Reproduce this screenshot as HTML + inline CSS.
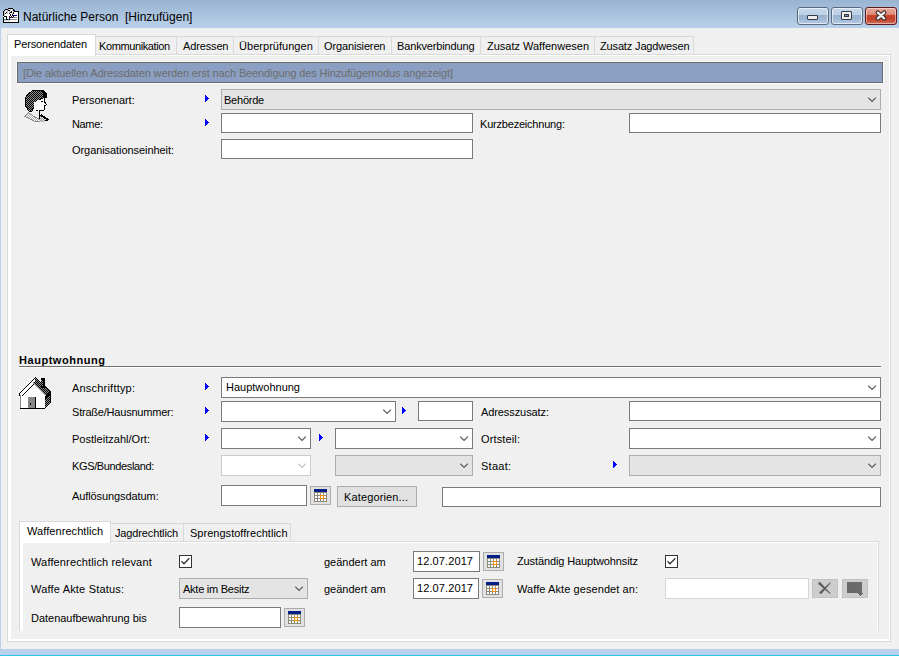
<!DOCTYPE html>
<html><head><meta charset="utf-8"><style>
html,body{margin:0;padding:0}
body{width:899px;height:656px;overflow:hidden;position:relative;background:#f0f0f0;font-family:"Liberation Sans",sans-serif}
body>div,body>svg{position:absolute;box-sizing:border-box}
.t{line-height:20px;white-space:pre}
</style></head><body>
<div style="left:0px;top:0px;width:899px;height:28px;background:linear-gradient(#99b4d1,#b9d1ea)"></div>
<div style="left:0px;top:28px;width:1px;height:621px;background:#b9d1ea"></div>
<div style="left:0px;top:649px;width:899px;height:6px;background:#bad2eb"></div>
<div style="left:0px;top:655px;width:899px;height:1px;background:#28c8e4"></div>
<div style="left:797px;top:7px;width:32px;height:18px;background:linear-gradient(#c5d7eb 0%,#bcd0e6 42%,#99b3d0 45%,#9fb8d4 70%,#b6cde6 100%);border:1px solid #5c6a80;border-radius:3px;box-shadow:inset 0 0 0 1px rgba(255,255,255,.6)"></div>
<div style="left:831px;top:7px;width:32px;height:18px;background:linear-gradient(#c5d7eb 0%,#bcd0e6 42%,#99b3d0 45%,#9fb8d4 70%,#b6cde6 100%);border:1px solid #5c6a80;border-radius:3px;box-shadow:inset 0 0 0 1px rgba(255,255,255,.6)"></div>
<div style="left:865px;top:7px;width:32px;height:18px;background:linear-gradient(#e9a99b 0%,#df8b79 40%,#c7472d 45%,#c34128 70%,#d2735d 100%);border:1px solid #5d1a1f;border-radius:3px;box-shadow:inset 0 0 0 1px rgba(255,255,255,.45)"></div>
<div style="left:807px;top:15px;width:11px;height:5px;background:#eee;border:1px solid #333a48;border-radius:1px"></div>
<div style="left:841px;top:11px;width:11px;height:9px;background:#eee;border:1px solid #333a48;border-radius:1px"></div>
<div style="left:844px;top:14px;width:5px;height:3px;background:#7d8fa8;border:1px solid #333a48"></div>
<svg style="left:873px;top:9px" width="16" height="13" viewBox="0 0 16 13"><path d="M4.8 3.6 L11.2 9.4 M11.2 3.6 L4.8 9.4" stroke="#3c2830" stroke-width="4.4" stroke-linecap="round"/><path d="M4.8 3.6 L11.2 9.4 M11.2 3.6 L4.8 9.4" stroke="#f2f2f2" stroke-width="2.2" stroke-linecap="round"/></svg>
<svg style="left:2px;top:7px" width="18" height="16" shape-rendering="crispEdges"><rect x="6" y="1" width="5" height="1" fill="#000"/><rect x="3" y="2" width="3" height="1" fill="#000"/><rect x="6" y="2" width="1" height="1" fill="#c0c0c0"/><rect x="7" y="2" width="1" height="1" fill="#fff"/><rect x="8" y="2" width="1" height="1" fill="#c0c0c0"/><rect x="9" y="2" width="1" height="1" fill="#fff"/><rect x="10" y="2" width="1" height="1" fill="#c0c0c0"/><rect x="11" y="2" width="1" height="1" fill="#000"/><rect x="2" y="3" width="1" height="1" fill="#000"/><rect x="3" y="3" width="1" height="1" fill="#c0c0c0"/><rect x="4" y="3" width="1" height="1" fill="#fff"/><rect x="5" y="3" width="1" height="1" fill="#c0c0c0"/><rect x="6" y="3" width="2" height="1" fill="#000"/><rect x="8" y="3" width="1" height="1" fill="#c0c0c0"/><rect x="9" y="3" width="1" height="1" fill="#fff"/><rect x="10" y="3" width="1" height="1" fill="#c0c0c0"/><rect x="11" y="3" width="2" height="1" fill="#000"/><rect x="1" y="4" width="1" height="1" fill="#000"/><rect x="2" y="4" width="1" height="1" fill="#c0c0c0"/><rect x="3" y="4" width="1" height="1" fill="#fff"/><rect x="4" y="4" width="2" height="1" fill="#c0c0c0"/><rect x="6" y="4" width="1" height="1" fill="#fff"/><rect x="7" y="4" width="1" height="1" fill="#c0c0c0"/><rect x="8" y="4" width="1" height="1" fill="#fff"/><rect x="9" y="4" width="1" height="1" fill="#000"/><rect x="10" y="4" width="1" height="1" fill="#fff"/><rect x="11" y="4" width="1" height="1" fill="#c0c0c0"/><rect x="12" y="4" width="5" height="1" fill="#000"/><rect x="1" y="5" width="1" height="1" fill="#000"/><rect x="2" y="5" width="1" height="1" fill="#c0c0c0"/><rect x="3" y="5" width="1" height="1" fill="#fff"/><rect x="4" y="5" width="1" height="1" fill="#000"/><rect x="5" y="5" width="1" height="1" fill="#c0c0c0"/><rect x="6" y="5" width="1" height="1" fill="#fff"/><rect x="7" y="5" width="1" height="1" fill="#c0c0c0"/><rect x="8" y="5" width="2" height="1" fill="#000"/><rect x="10" y="5" width="1" height="1" fill="#fff"/><rect x="11" y="5" width="1" height="1" fill="#000"/><rect x="12" y="5" width="4" height="1" fill="#fff"/><rect x="16" y="5" width="1" height="1" fill="#000"/><rect x="1" y="6" width="1" height="1" fill="#000"/><rect x="2" y="6" width="1" height="1" fill="#c0c0c0"/><rect x="3" y="6" width="1" height="1" fill="#000"/><rect x="4" y="6" width="1" height="1" fill="#fff"/><rect x="5" y="6" width="1" height="1" fill="#c0c0c0"/><rect x="6" y="6" width="1" height="1" fill="#fff"/><rect x="7" y="6" width="1" height="1" fill="#000"/><rect x="8" y="6" width="2" height="1" fill="#fff"/><rect x="10" y="6" width="1" height="1" fill="#c0c0c0"/><rect x="11" y="6" width="1" height="1" fill="#000"/><rect x="12" y="6" width="4" height="1" fill="#fff"/><rect x="16" y="6" width="1" height="1" fill="#000"/><rect x="1" y="7" width="1" height="1" fill="#000"/><rect x="2" y="7" width="1" height="1" fill="#c0c0c0"/><rect x="3" y="7" width="5" height="1" fill="#fff"/><rect x="8" y="7" width="1" height="1" fill="#000"/><rect x="9" y="7" width="1" height="1" fill="#fff"/><rect x="10" y="7" width="1" height="1" fill="#000"/><rect x="11" y="7" width="5" height="1" fill="#fff"/><rect x="16" y="7" width="1" height="1" fill="#000"/><rect x="1" y="8" width="1" height="1" fill="#000"/><rect x="2" y="8" width="1" height="1" fill="#c0c0c0"/><rect x="3" y="8" width="5" height="1" fill="#fff"/><rect x="8" y="8" width="1" height="1" fill="#000"/><rect x="9" y="8" width="1" height="1" fill="#fff"/><rect x="10" y="8" width="1" height="1" fill="#000"/><rect x="11" y="8" width="4" height="1" fill="#00008c"/><rect x="15" y="8" width="1" height="1" fill="#fff"/><rect x="16" y="8" width="1" height="1" fill="#000"/><rect x="1" y="9" width="1" height="1" fill="#fff"/><rect x="2" y="9" width="3" height="1" fill="#000"/><rect x="5" y="9" width="2" height="1" fill="#fff"/><rect x="7" y="9" width="1" height="1" fill="#000"/><rect x="8" y="9" width="1" height="1" fill="#fff"/><rect x="9" y="9" width="1" height="1" fill="#000"/><rect x="10" y="9" width="1" height="1" fill="#fff"/><rect x="11" y="9" width="1" height="1" fill="#000"/><rect x="12" y="9" width="4" height="1" fill="#fff"/><rect x="16" y="9" width="1" height="1" fill="#000"/><rect x="1" y="10" width="1" height="1" fill="#000"/><rect x="2" y="10" width="2" height="1" fill="#fff"/><rect x="4" y="10" width="1" height="1" fill="#000"/><rect x="5" y="10" width="2" height="1" fill="#fff"/><rect x="7" y="10" width="1" height="1" fill="#a000a8"/><rect x="8" y="10" width="1" height="1" fill="#000"/><rect x="9" y="10" width="1" height="1" fill="#a000a8"/><rect x="10" y="10" width="1" height="1" fill="#000"/><rect x="11" y="10" width="4" height="1" fill="#8c8c8c"/><rect x="15" y="10" width="1" height="1" fill="#fff"/><rect x="16" y="10" width="1" height="1" fill="#000"/><rect x="1" y="11" width="1" height="1" fill="#000"/><rect x="2" y="11" width="2" height="1" fill="#fff"/><rect x="4" y="11" width="1" height="1" fill="#000"/><rect x="5" y="11" width="2" height="1" fill="#fff"/><rect x="7" y="11" width="1" height="1" fill="#000"/><rect x="8" y="11" width="8" height="1" fill="#fff"/><rect x="16" y="11" width="1" height="1" fill="#000"/><rect x="1" y="12" width="1" height="1" fill="#000"/><rect x="2" y="12" width="2" height="1" fill="#1aa8a8"/><rect x="4" y="12" width="2" height="1" fill="#000"/><rect x="6" y="12" width="1" height="1" fill="#1aa8a8"/><rect x="7" y="12" width="1" height="1" fill="#000"/><rect x="8" y="12" width="7" height="1" fill="#8c8c8c"/><rect x="15" y="12" width="1" height="1" fill="#fff"/><rect x="16" y="12" width="1" height="1" fill="#000"/><rect x="1" y="13" width="1" height="1" fill="#000"/><rect x="2" y="13" width="6" height="1" fill="#d8cccc"/><rect x="8" y="13" width="8" height="1" fill="#fff"/><rect x="16" y="13" width="1" height="1" fill="#000"/><rect x="1" y="14" width="1" height="1" fill="#000"/><rect x="2" y="14" width="14" height="1" fill="#fff"/><rect x="16" y="14" width="1" height="1" fill="#000"/><rect x="1" y="15" width="16" height="1" fill="#000"/></svg>
<div style="left:7px;top:54px;width:884px;height:588px;border:1px solid #d9d9d9;box-sizing:border-box"></div>
<div style="left:8px;top:55px;width:882px;height:586px;border-left:3px solid #fff;border-top:1px solid #fff;border-right:1px solid #fff;border-bottom:2px solid #fff;box-sizing:border-box"></div>
<div style="left:95px;top:36px;width:82px;height:18px;border:1px solid #d9d9d9;border-bottom:none;box-sizing:border-box;background:#f0f0f0"></div>
<div style="left:176px;top:36px;width:58px;height:18px;border:1px solid #d9d9d9;border-bottom:none;box-sizing:border-box;background:#f0f0f0"></div>
<div style="left:233px;top:36px;width:86px;height:18px;border:1px solid #d9d9d9;border-bottom:none;box-sizing:border-box;background:#f0f0f0"></div>
<div style="left:318px;top:36px;width:74px;height:18px;border:1px solid #d9d9d9;border-bottom:none;box-sizing:border-box;background:#f0f0f0"></div>
<div style="left:391px;top:36px;width:90px;height:18px;border:1px solid #d9d9d9;border-bottom:none;box-sizing:border-box;background:#f0f0f0"></div>
<div style="left:480px;top:36px;width:115px;height:18px;border:1px solid #d9d9d9;border-bottom:none;box-sizing:border-box;background:#f0f0f0"></div>
<div style="left:594px;top:36px;width:100px;height:18px;border:1px solid #d9d9d9;border-bottom:none;box-sizing:border-box;background:#f0f0f0"></div>
<div style="left:7px;top:34px;width:89px;height:22px;border:1px solid #d9d9d9;border-bottom:none;box-sizing:border-box;background:#fff"></div>
<div style="left:16px;top:61px;width:868px;height:23px;background:#fbfbfb"></div>
<div style="left:17px;top:62px;width:866px;height:21px;background:#8a9fc1;border:1px solid #6b6b6b;box-sizing:border-box"></div>
<svg style="left:205px;top:95px" width="4" height="7" shape-rendering="crispEdges"><rect x="0" y="0" width="1" height="7" fill="#0000ff"/><rect x="1" y="1" width="1" height="5" fill="#0000ff"/><rect x="2" y="2" width="1" height="3" fill="#0000ff"/><rect x="3" y="3" width="1" height="1" fill="#0000ff"/></svg>
<svg style="left:205px;top:119px" width="4" height="7" shape-rendering="crispEdges"><rect x="0" y="0" width="1" height="7" fill="#0000ff"/><rect x="1" y="1" width="1" height="5" fill="#0000ff"/><rect x="2" y="2" width="1" height="3" fill="#0000ff"/><rect x="3" y="3" width="1" height="1" fill="#0000ff"/></svg>
<div style="left:221px;top:89px;width:660px;height:21px;background:#e4e4e4;border:1px solid #adadad;box-sizing:border-box"></div>
<svg style="left:868px;top:97px" width="9" height="6" viewBox="0 0 9 6"><path d="M0.25 0.7 L4.05 4.5 L7.85 0.7" fill="none" stroke="#555" stroke-width="1.15"/></svg>
<div style="left:221px;top:113px;width:252px;height:20px;background:#fff;border:1px solid #7a7a7a;box-sizing:border-box"></div>
<div style="left:629px;top:113px;width:252px;height:20px;background:#fff;border:1px solid #7a7a7a;box-sizing:border-box"></div>
<div style="left:221px;top:139px;width:252px;height:20px;background:#fff;border:1px solid #7a7a7a;box-sizing:border-box"></div>
<svg style="left:22px;top:88px" width="28" height="34" shape-rendering="crispEdges"><rect x="10" y="2" width="12" height="1" fill="#000"/><rect x="9" y="3" width="1" height="1" fill="#000"/><rect x="10" y="3" width="1" height="1" fill="#8c8c8c"/><rect x="11" y="3" width="1" height="1" fill="#000"/><rect x="12" y="3" width="1" height="1" fill="#8c8c8c"/><rect x="13" y="3" width="1" height="1" fill="#000"/><rect x="14" y="3" width="1" height="1" fill="#8c8c8c"/><rect x="15" y="3" width="1" height="1" fill="#000"/><rect x="16" y="3" width="1" height="1" fill="#8c8c8c"/><rect x="17" y="3" width="1" height="1" fill="#000"/><rect x="18" y="3" width="1" height="1" fill="#8c8c8c"/><rect x="19" y="3" width="4" height="1" fill="#000"/><rect x="7" y="4" width="2" height="1" fill="#000"/><rect x="9" y="4" width="1" height="1" fill="#8c8c8c"/><rect x="10" y="4" width="1" height="1" fill="#000"/><rect x="11" y="4" width="1" height="1" fill="#8c8c8c"/><rect x="12" y="4" width="1" height="1" fill="#000"/><rect x="13" y="4" width="1" height="1" fill="#8c8c8c"/><rect x="14" y="4" width="1" height="1" fill="#000"/><rect x="15" y="4" width="1" height="1" fill="#8c8c8c"/><rect x="16" y="4" width="1" height="1" fill="#000"/><rect x="17" y="4" width="1" height="1" fill="#8c8c8c"/><rect x="18" y="4" width="1" height="1" fill="#000"/><rect x="19" y="4" width="1" height="1" fill="#8c8c8c"/><rect x="20" y="4" width="4" height="1" fill="#000"/><rect x="6" y="5" width="2" height="1" fill="#000"/><rect x="8" y="5" width="1" height="1" fill="#8c8c8c"/><rect x="9" y="5" width="1" height="1" fill="#000"/><rect x="10" y="5" width="1" height="1" fill="#8c8c8c"/><rect x="11" y="5" width="1" height="1" fill="#000"/><rect x="12" y="5" width="1" height="1" fill="#8c8c8c"/><rect x="13" y="5" width="1" height="1" fill="#000"/><rect x="14" y="5" width="1" height="1" fill="#8c8c8c"/><rect x="15" y="5" width="1" height="1" fill="#000"/><rect x="16" y="5" width="1" height="1" fill="#8c8c8c"/><rect x="17" y="5" width="1" height="1" fill="#000"/><rect x="18" y="5" width="1" height="1" fill="#8c8c8c"/><rect x="19" y="5" width="1" height="1" fill="#000"/><rect x="20" y="5" width="1" height="1" fill="#8c8c8c"/><rect x="21" y="5" width="4" height="1" fill="#000"/><rect x="5" y="6" width="2" height="1" fill="#000"/><rect x="7" y="6" width="1" height="1" fill="#8c8c8c"/><rect x="8" y="6" width="1" height="1" fill="#000"/><rect x="9" y="6" width="1" height="1" fill="#8c8c8c"/><rect x="10" y="6" width="1" height="1" fill="#000"/><rect x="11" y="6" width="1" height="1" fill="#8c8c8c"/><rect x="12" y="6" width="1" height="1" fill="#000"/><rect x="13" y="6" width="1" height="1" fill="#8c8c8c"/><rect x="14" y="6" width="1" height="1" fill="#000"/><rect x="15" y="6" width="1" height="1" fill="#8c8c8c"/><rect x="16" y="6" width="1" height="1" fill="#000"/><rect x="17" y="6" width="1" height="1" fill="#8c8c8c"/><rect x="18" y="6" width="1" height="1" fill="#000"/><rect x="19" y="6" width="1" height="1" fill="#8c8c8c"/><rect x="20" y="6" width="5" height="1" fill="#000"/><rect x="4" y="7" width="2" height="1" fill="#000"/><rect x="6" y="7" width="1" height="1" fill="#8c8c8c"/><rect x="7" y="7" width="1" height="1" fill="#000"/><rect x="8" y="7" width="1" height="1" fill="#8c8c8c"/><rect x="9" y="7" width="1" height="1" fill="#000"/><rect x="10" y="7" width="1" height="1" fill="#8c8c8c"/><rect x="11" y="7" width="1" height="1" fill="#000"/><rect x="12" y="7" width="1" height="1" fill="#8c8c8c"/><rect x="13" y="7" width="1" height="1" fill="#000"/><rect x="14" y="7" width="1" height="1" fill="#8c8c8c"/><rect x="15" y="7" width="1" height="1" fill="#000"/><rect x="16" y="7" width="1" height="1" fill="#8c8c8c"/><rect x="17" y="7" width="1" height="1" fill="#000"/><rect x="18" y="7" width="1" height="1" fill="#8c8c8c"/><rect x="19" y="7" width="1" height="1" fill="#000"/><rect x="20" y="7" width="1" height="1" fill="#8c8c8c"/><rect x="21" y="7" width="4" height="1" fill="#000"/><rect x="4" y="8" width="1" height="1" fill="#000"/><rect x="5" y="8" width="1" height="1" fill="#8c8c8c"/><rect x="6" y="8" width="1" height="1" fill="#000"/><rect x="7" y="8" width="1" height="1" fill="#8c8c8c"/><rect x="8" y="8" width="1" height="1" fill="#000"/><rect x="9" y="8" width="1" height="1" fill="#8c8c8c"/><rect x="10" y="8" width="1" height="1" fill="#000"/><rect x="11" y="8" width="1" height="1" fill="#8c8c8c"/><rect x="12" y="8" width="1" height="1" fill="#000"/><rect x="13" y="8" width="1" height="1" fill="#8c8c8c"/><rect x="14" y="8" width="1" height="1" fill="#000"/><rect x="15" y="8" width="1" height="1" fill="#8c8c8c"/><rect x="16" y="8" width="1" height="1" fill="#000"/><rect x="17" y="8" width="1" height="1" fill="#8c8c8c"/><rect x="18" y="8" width="1" height="1" fill="#000"/><rect x="19" y="8" width="1" height="1" fill="#8c8c8c"/><rect x="20" y="8" width="5" height="1" fill="#000"/><rect x="3" y="9" width="1" height="1" fill="#000"/><rect x="4" y="9" width="1" height="1" fill="#8c8c8c"/><rect x="5" y="9" width="1" height="1" fill="#000"/><rect x="6" y="9" width="1" height="1" fill="#8c8c8c"/><rect x="7" y="9" width="1" height="1" fill="#000"/><rect x="8" y="9" width="1" height="1" fill="#8c8c8c"/><rect x="9" y="9" width="1" height="1" fill="#000"/><rect x="10" y="9" width="1" height="1" fill="#8c8c8c"/><rect x="11" y="9" width="1" height="1" fill="#000"/><rect x="12" y="9" width="1" height="1" fill="#8c8c8c"/><rect x="13" y="9" width="1" height="1" fill="#000"/><rect x="14" y="9" width="1" height="1" fill="#8c8c8c"/><rect x="15" y="9" width="1" height="1" fill="#000"/><rect x="16" y="9" width="1" height="1" fill="#8c8c8c"/><rect x="17" y="9" width="1" height="1" fill="#000"/><rect x="18" y="9" width="1" height="1" fill="#8c8c8c"/><rect x="19" y="9" width="1" height="1" fill="#000"/><rect x="20" y="9" width="1" height="1" fill="#8c8c8c"/><rect x="21" y="9" width="4" height="1" fill="#000"/><rect x="3" y="10" width="2" height="1" fill="#000"/><rect x="5" y="10" width="1" height="1" fill="#8c8c8c"/><rect x="6" y="10" width="1" height="1" fill="#000"/><rect x="7" y="10" width="1" height="1" fill="#8c8c8c"/><rect x="8" y="10" width="1" height="1" fill="#000"/><rect x="9" y="10" width="1" height="1" fill="#8c8c8c"/><rect x="10" y="10" width="1" height="1" fill="#000"/><rect x="11" y="10" width="1" height="1" fill="#8c8c8c"/><rect x="12" y="10" width="1" height="1" fill="#000"/><rect x="13" y="10" width="1" height="1" fill="#8c8c8c"/><rect x="14" y="10" width="1" height="1" fill="#000"/><rect x="15" y="10" width="1" height="1" fill="#8c8c8c"/><rect x="16" y="10" width="1" height="1" fill="#000"/><rect x="17" y="10" width="1" height="1" fill="#8c8c8c"/><rect x="18" y="10" width="3" height="1" fill="#000"/><rect x="22" y="10" width="1" height="1" fill="#000"/><rect x="3" y="11" width="1" height="1" fill="#000"/><rect x="4" y="11" width="1" height="1" fill="#8c8c8c"/><rect x="5" y="11" width="1" height="1" fill="#000"/><rect x="6" y="11" width="1" height="1" fill="#8c8c8c"/><rect x="7" y="11" width="1" height="1" fill="#000"/><rect x="8" y="11" width="1" height="1" fill="#8c8c8c"/><rect x="9" y="11" width="1" height="1" fill="#000"/><rect x="10" y="11" width="1" height="1" fill="#8c8c8c"/><rect x="11" y="11" width="1" height="1" fill="#000"/><rect x="12" y="11" width="1" height="1" fill="#8c8c8c"/><rect x="13" y="11" width="1" height="1" fill="#000"/><rect x="14" y="11" width="1" height="1" fill="#8c8c8c"/><rect x="15" y="11" width="1" height="1" fill="#000"/><rect x="16" y="11" width="1" height="1" fill="#8c8c8c"/><rect x="17" y="11" width="2" height="1" fill="#000"/><rect x="19" y="11" width="3" height="1" fill="#fff"/><rect x="22" y="11" width="1" height="1" fill="#000"/><rect x="3" y="12" width="2" height="1" fill="#000"/><rect x="5" y="12" width="1" height="1" fill="#8c8c8c"/><rect x="6" y="12" width="1" height="1" fill="#000"/><rect x="7" y="12" width="1" height="1" fill="#8c8c8c"/><rect x="8" y="12" width="1" height="1" fill="#000"/><rect x="9" y="12" width="1" height="1" fill="#8c8c8c"/><rect x="10" y="12" width="1" height="1" fill="#000"/><rect x="11" y="12" width="1" height="1" fill="#8c8c8c"/><rect x="12" y="12" width="1" height="1" fill="#000"/><rect x="13" y="12" width="1" height="1" fill="#8c8c8c"/><rect x="14" y="12" width="1" height="1" fill="#000"/><rect x="15" y="12" width="7" height="1" fill="#fff"/><rect x="22" y="12" width="1" height="1" fill="#000"/><rect x="3" y="13" width="1" height="1" fill="#000"/><rect x="4" y="13" width="1" height="1" fill="#8c8c8c"/><rect x="5" y="13" width="1" height="1" fill="#000"/><rect x="6" y="13" width="1" height="1" fill="#8c8c8c"/><rect x="7" y="13" width="1" height="1" fill="#000"/><rect x="8" y="13" width="1" height="1" fill="#8c8c8c"/><rect x="9" y="13" width="1" height="1" fill="#000"/><rect x="10" y="13" width="1" height="1" fill="#8c8c8c"/><rect x="11" y="13" width="1" height="1" fill="#000"/><rect x="12" y="13" width="1" height="1" fill="#8c8c8c"/><rect x="13" y="13" width="1" height="1" fill="#000"/><rect x="14" y="13" width="5" height="1" fill="#fff"/><rect x="19" y="13" width="2" height="1" fill="#000"/><rect x="21" y="13" width="1" height="1" fill="#fff"/><rect x="22" y="13" width="1" height="1" fill="#000"/><rect x="3" y="14" width="2" height="1" fill="#000"/><rect x="5" y="14" width="1" height="1" fill="#8c8c8c"/><rect x="6" y="14" width="1" height="1" fill="#000"/><rect x="7" y="14" width="1" height="1" fill="#8c8c8c"/><rect x="8" y="14" width="1" height="1" fill="#000"/><rect x="9" y="14" width="1" height="1" fill="#8c8c8c"/><rect x="10" y="14" width="1" height="1" fill="#000"/><rect x="11" y="14" width="1" height="1" fill="#8c8c8c"/><rect x="12" y="14" width="10" height="1" fill="#fff"/><rect x="22" y="14" width="2" height="1" fill="#000"/><rect x="3" y="15" width="1" height="1" fill="#000"/><rect x="4" y="15" width="1" height="1" fill="#8c8c8c"/><rect x="5" y="15" width="1" height="1" fill="#000"/><rect x="6" y="15" width="1" height="1" fill="#8c8c8c"/><rect x="7" y="15" width="1" height="1" fill="#000"/><rect x="8" y="15" width="1" height="1" fill="#8c8c8c"/><rect x="9" y="15" width="1" height="1" fill="#000"/><rect x="10" y="15" width="1" height="1" fill="#8c8c8c"/><rect x="11" y="15" width="1" height="1" fill="#000"/><rect x="12" y="15" width="11" height="1" fill="#fff"/><rect x="23" y="15" width="1" height="1" fill="#000"/><rect x="3" y="16" width="2" height="1" fill="#000"/><rect x="5" y="16" width="1" height="1" fill="#8c8c8c"/><rect x="6" y="16" width="1" height="1" fill="#000"/><rect x="7" y="16" width="1" height="1" fill="#8c8c8c"/><rect x="8" y="16" width="1" height="1" fill="#000"/><rect x="9" y="16" width="1" height="1" fill="#8c8c8c"/><rect x="10" y="16" width="1" height="1" fill="#000"/><rect x="11" y="16" width="1" height="1" fill="#8c8c8c"/><rect x="12" y="16" width="11" height="1" fill="#fff"/><rect x="24" y="16" width="1" height="1" fill="#000"/><rect x="3" y="17" width="1" height="1" fill="#000"/><rect x="4" y="17" width="1" height="1" fill="#8c8c8c"/><rect x="5" y="17" width="1" height="1" fill="#000"/><rect x="6" y="17" width="1" height="1" fill="#8c8c8c"/><rect x="7" y="17" width="1" height="1" fill="#000"/><rect x="8" y="17" width="1" height="1" fill="#8c8c8c"/><rect x="9" y="17" width="1" height="1" fill="#000"/><rect x="10" y="17" width="1" height="1" fill="#8c8c8c"/><rect x="11" y="17" width="1" height="1" fill="#000"/><rect x="12" y="17" width="10" height="1" fill="#fff"/><rect x="22" y="17" width="2" height="1" fill="#000"/><rect x="3" y="18" width="2" height="1" fill="#000"/><rect x="5" y="18" width="1" height="1" fill="#8c8c8c"/><rect x="6" y="18" width="1" height="1" fill="#000"/><rect x="7" y="18" width="1" height="1" fill="#8c8c8c"/><rect x="8" y="18" width="1" height="1" fill="#000"/><rect x="9" y="18" width="1" height="1" fill="#8c8c8c"/><rect x="10" y="18" width="1" height="1" fill="#000"/><rect x="11" y="18" width="1" height="1" fill="#8c8c8c"/><rect x="12" y="18" width="10" height="1" fill="#fff"/><rect x="22" y="18" width="1" height="1" fill="#000"/><rect x="4" y="19" width="2" height="1" fill="#000"/><rect x="6" y="19" width="1" height="1" fill="#8c8c8c"/><rect x="7" y="19" width="1" height="1" fill="#000"/><rect x="8" y="19" width="1" height="1" fill="#8c8c8c"/><rect x="9" y="19" width="1" height="1" fill="#000"/><rect x="10" y="19" width="1" height="1" fill="#8c8c8c"/><rect x="11" y="19" width="1" height="1" fill="#000"/><rect x="12" y="19" width="10" height="1" fill="#fff"/><rect x="22" y="19" width="1" height="1" fill="#000"/><rect x="5" y="20" width="2" height="1" fill="#000"/><rect x="7" y="20" width="1" height="1" fill="#8c8c8c"/><rect x="8" y="20" width="1" height="1" fill="#000"/><rect x="9" y="20" width="1" height="1" fill="#8c8c8c"/><rect x="10" y="20" width="2" height="1" fill="#000"/><rect x="12" y="20" width="10" height="1" fill="#fff"/><rect x="22" y="20" width="1" height="1" fill="#000"/><rect x="5" y="21" width="1" height="1" fill="#000"/><rect x="6" y="21" width="1" height="1" fill="#8c8c8c"/><rect x="7" y="21" width="1" height="1" fill="#000"/><rect x="8" y="21" width="1" height="1" fill="#8c8c8c"/><rect x="9" y="21" width="2" height="1" fill="#000"/><rect x="13" y="21" width="9" height="1" fill="#fff"/><rect x="22" y="21" width="1" height="1" fill="#000"/><rect x="6" y="22" width="1" height="1" fill="#000"/><rect x="7" y="22" width="1" height="1" fill="#8c8c8c"/><rect x="8" y="22" width="1" height="1" fill="#000"/><rect x="9" y="22" width="1" height="1" fill="#8c8c8c"/><rect x="10" y="22" width="1" height="1" fill="#000"/><rect x="13" y="22" width="1" height="1" fill="#fff"/><rect x="14" y="22" width="2" height="1" fill="#000"/><rect x="16" y="22" width="1" height="1" fill="#fff"/><rect x="17" y="22" width="5" height="1" fill="#000"/><rect x="22" y="22" width="1" height="1" fill="#fff"/><rect x="7" y="23" width="3" height="1" fill="#000"/><rect x="17" y="23" width="1" height="1" fill="#000"/><rect x="6" y="24" width="1" height="1" fill="#888"/><rect x="17" y="24" width="1" height="1" fill="#000"/><rect x="5" y="25" width="1" height="1" fill="#888"/><rect x="6" y="25" width="1" height="1" fill="#b0b0b0"/><rect x="7" y="25" width="1" height="1" fill="#888"/><rect x="17" y="25" width="1" height="1" fill="#000"/><rect x="4" y="26" width="1" height="1" fill="#888"/><rect x="5" y="26" width="1" height="1" fill="#b0b0b0"/><rect x="6" y="26" width="1" height="1" fill="#fff"/><rect x="7" y="26" width="1" height="1" fill="#b0b0b0"/><rect x="8" y="26" width="2" height="1" fill="#888"/><rect x="17" y="26" width="1" height="1" fill="#000"/><rect x="19" y="26" width="1" height="1" fill="#000"/><rect x="3" y="27" width="1" height="1" fill="#888"/><rect x="4" y="27" width="1" height="1" fill="#b0b0b0"/><rect x="5" y="27" width="1" height="1" fill="#fff"/><rect x="6" y="27" width="1" height="1" fill="#b0b0b0"/><rect x="7" y="27" width="1" height="1" fill="#fff"/><rect x="8" y="27" width="1" height="1" fill="#b0b0b0"/><rect x="9" y="27" width="1" height="1" fill="#fff"/><rect x="10" y="27" width="1" height="1" fill="#888"/><rect x="17" y="27" width="4" height="1" fill="#000"/><rect x="2" y="28" width="2" height="1" fill="#888"/><rect x="4" y="28" width="1" height="1" fill="#fff"/><rect x="5" y="28" width="1" height="1" fill="#b0b0b0"/><rect x="6" y="28" width="1" height="1" fill="#fff"/><rect x="7" y="28" width="1" height="1" fill="#b0b0b0"/><rect x="8" y="28" width="1" height="1" fill="#fff"/><rect x="9" y="28" width="1" height="1" fill="#b0b0b0"/><rect x="10" y="28" width="1" height="1" fill="#fff"/><rect x="11" y="28" width="2" height="1" fill="#888"/><rect x="17" y="28" width="1" height="1" fill="#000"/><rect x="18" y="28" width="1" height="1" fill="#999"/><rect x="19" y="28" width="4" height="1" fill="#000"/><rect x="4" y="29" width="2" height="1" fill="#888"/><rect x="6" y="29" width="1" height="1" fill="#b0b0b0"/><rect x="7" y="29" width="1" height="1" fill="#fff"/><rect x="8" y="29" width="1" height="1" fill="#b0b0b0"/><rect x="9" y="29" width="1" height="1" fill="#fff"/><rect x="10" y="29" width="1" height="1" fill="#b0b0b0"/><rect x="11" y="29" width="1" height="1" fill="#fff"/><rect x="12" y="29" width="1" height="1" fill="#b0b0b0"/><rect x="13" y="29" width="2" height="1" fill="#888"/><rect x="17" y="29" width="1" height="1" fill="#000"/><rect x="18" y="29" width="1" height="1" fill="#ddd"/><rect x="19" y="29" width="1" height="1" fill="#999"/><rect x="21" y="29" width="3" height="1" fill="#000"/><rect x="6" y="30" width="2" height="1" fill="#888"/><rect x="8" y="30" width="1" height="1" fill="#fff"/><rect x="9" y="30" width="1" height="1" fill="#b0b0b0"/><rect x="10" y="30" width="1" height="1" fill="#fff"/><rect x="11" y="30" width="1" height="1" fill="#b0b0b0"/><rect x="12" y="30" width="1" height="1" fill="#fff"/><rect x="13" y="30" width="1" height="1" fill="#b0b0b0"/><rect x="14" y="30" width="1" height="1" fill="#fff"/><rect x="15" y="30" width="2" height="1" fill="#888"/><rect x="17" y="30" width="1" height="1" fill="#000"/><rect x="18" y="30" width="1" height="1" fill="#999"/><rect x="19" y="30" width="1" height="1" fill="#ddd"/><rect x="20" y="30" width="1" height="1" fill="#999"/><rect x="21" y="30" width="1" height="1" fill="#ddd"/><rect x="22" y="30" width="4" height="1" fill="#000"/><rect x="8" y="31" width="2" height="1" fill="#888"/><rect x="10" y="31" width="1" height="1" fill="#b0b0b0"/><rect x="11" y="31" width="1" height="1" fill="#fff"/><rect x="12" y="31" width="1" height="1" fill="#b0b0b0"/><rect x="13" y="31" width="1" height="1" fill="#fff"/><rect x="14" y="31" width="1" height="1" fill="#b0b0b0"/><rect x="15" y="31" width="1" height="1" fill="#fff"/><rect x="16" y="31" width="1" height="1" fill="#b0b0b0"/><rect x="17" y="31" width="1" height="1" fill="#999"/><rect x="18" y="31" width="1" height="1" fill="#ddd"/><rect x="19" y="31" width="1" height="1" fill="#999"/><rect x="20" y="31" width="1" height="1" fill="#ddd"/><rect x="21" y="31" width="1" height="1" fill="#999"/><rect x="22" y="31" width="1" height="1" fill="#ddd"/><rect x="24" y="31" width="3" height="1" fill="#000"/><rect x="10" y="32" width="2" height="1" fill="#888"/><rect x="12" y="32" width="1" height="1" fill="#fff"/><rect x="13" y="32" width="1" height="1" fill="#b0b0b0"/><rect x="14" y="32" width="1" height="1" fill="#fff"/><rect x="15" y="32" width="1" height="1" fill="#b0b0b0"/><rect x="16" y="32" width="1" height="1" fill="#fff"/><rect x="17" y="32" width="1" height="1" fill="#ddd"/><rect x="18" y="32" width="1" height="1" fill="#999"/><rect x="19" y="32" width="1" height="1" fill="#ddd"/><rect x="20" y="32" width="1" height="1" fill="#999"/><rect x="21" y="32" width="1" height="1" fill="#ddd"/><rect x="22" y="32" width="1" height="1" fill="#999"/><rect x="23" y="32" width="3" height="1" fill="#000"/><rect x="12" y="33" width="5" height="1" fill="#888"/><rect x="17" y="33" width="1" height="1" fill="#999"/><rect x="18" y="33" width="1" height="1" fill="#ddd"/><rect x="19" y="33" width="1" height="1" fill="#999"/><rect x="20" y="33" width="1" height="1" fill="#ddd"/><rect x="21" y="33" width="1" height="1" fill="#999"/><rect x="22" y="33" width="1" height="1" fill="#ddd"/></svg>
<div style="left:19px;top:366px;width:862px;height:1px;background:#6e6e6e"></div>
<div style="left:19px;top:367px;width:862px;height:1px;background:#fff"></div>
<svg style="left:16px;top:374px" width="38" height="38" shape-rendering="crispEdges"><rect x="19" y="3" width="1" height="1" fill="#000"/><rect x="18" y="4" width="1" height="1" fill="#000"/><rect x="19" y="4" width="1" height="1" fill="#8c8c8c"/><rect x="20" y="4" width="1" height="1" fill="#000"/><rect x="25" y="4" width="4" height="1" fill="#000"/><rect x="17" y="5" width="1" height="1" fill="#000"/><rect x="18" y="5" width="1" height="1" fill="#fff"/><rect x="19" y="5" width="1" height="1" fill="#000"/><rect x="20" y="5" width="1" height="1" fill="#8c8c8c"/><rect x="21" y="5" width="1" height="1" fill="#000"/><rect x="25" y="5" width="4" height="1" fill="#000"/><rect x="16" y="6" width="1" height="1" fill="#000"/><rect x="17" y="6" width="2" height="1" fill="#fff"/><rect x="19" y="6" width="1" height="1" fill="#8c8c8c"/><rect x="20" y="6" width="1" height="1" fill="#000"/><rect x="21" y="6" width="1" height="1" fill="#8c8c8c"/><rect x="22" y="6" width="1" height="1" fill="#000"/><rect x="25" y="6" width="1" height="1" fill="#888"/><rect x="26" y="6" width="3" height="1" fill="#000"/><rect x="15" y="7" width="1" height="1" fill="#000"/><rect x="16" y="7" width="3" height="1" fill="#fff"/><rect x="19" y="7" width="1" height="1" fill="#000"/><rect x="20" y="7" width="1" height="1" fill="#8c8c8c"/><rect x="21" y="7" width="1" height="1" fill="#000"/><rect x="22" y="7" width="1" height="1" fill="#8c8c8c"/><rect x="23" y="7" width="1" height="1" fill="#000"/><rect x="25" y="7" width="1" height="1" fill="#000"/><rect x="26" y="7" width="1" height="1" fill="#888"/><rect x="27" y="7" width="2" height="1" fill="#000"/><rect x="14" y="8" width="1" height="1" fill="#000"/><rect x="15" y="8" width="2" height="1" fill="#fff"/><rect x="17" y="8" width="1" height="1" fill="#888"/><rect x="18" y="8" width="1" height="1" fill="#000"/><rect x="19" y="8" width="1" height="1" fill="#8c8c8c"/><rect x="20" y="8" width="1" height="1" fill="#000"/><rect x="21" y="8" width="1" height="1" fill="#8c8c8c"/><rect x="22" y="8" width="1" height="1" fill="#000"/><rect x="23" y="8" width="1" height="1" fill="#8c8c8c"/><rect x="24" y="8" width="1" height="1" fill="#000"/><rect x="25" y="8" width="1" height="1" fill="#888"/><rect x="26" y="8" width="3" height="1" fill="#000"/><rect x="13" y="9" width="1" height="1" fill="#000"/><rect x="14" y="9" width="3" height="1" fill="#fff"/><rect x="17" y="9" width="1" height="1" fill="#b8b8b8"/><rect x="18" y="9" width="1" height="1" fill="#888"/><rect x="19" y="9" width="1" height="1" fill="#000"/><rect x="20" y="9" width="1" height="1" fill="#8c8c8c"/><rect x="21" y="9" width="1" height="1" fill="#000"/><rect x="22" y="9" width="1" height="1" fill="#8c8c8c"/><rect x="23" y="9" width="1" height="1" fill="#000"/><rect x="24" y="9" width="1" height="1" fill="#8c8c8c"/><rect x="25" y="9" width="1" height="1" fill="#000"/><rect x="26" y="9" width="1" height="1" fill="#888"/><rect x="27" y="9" width="2" height="1" fill="#000"/><rect x="12" y="10" width="1" height="1" fill="#000"/><rect x="13" y="10" width="3" height="1" fill="#fff"/><rect x="17" y="10" width="1" height="1" fill="#000"/><rect x="18" y="10" width="1" height="1" fill="#b8b8b8"/><rect x="19" y="10" width="1" height="1" fill="#888"/><rect x="20" y="10" width="1" height="1" fill="#000"/><rect x="21" y="10" width="1" height="1" fill="#8c8c8c"/><rect x="22" y="10" width="1" height="1" fill="#000"/><rect x="23" y="10" width="1" height="1" fill="#8c8c8c"/><rect x="24" y="10" width="1" height="1" fill="#000"/><rect x="25" y="10" width="1" height="1" fill="#888"/><rect x="26" y="10" width="3" height="1" fill="#000"/><rect x="11" y="11" width="1" height="1" fill="#000"/><rect x="12" y="11" width="3" height="1" fill="#fff"/><rect x="16" y="11" width="1" height="1" fill="#000"/><rect x="17" y="11" width="2" height="1" fill="#fff"/><rect x="19" y="11" width="1" height="1" fill="#b8b8b8"/><rect x="20" y="11" width="1" height="1" fill="#888"/><rect x="21" y="11" width="1" height="1" fill="#000"/><rect x="22" y="11" width="1" height="1" fill="#8c8c8c"/><rect x="23" y="11" width="1" height="1" fill="#000"/><rect x="24" y="11" width="1" height="1" fill="#8c8c8c"/><rect x="25" y="11" width="1" height="1" fill="#000"/><rect x="26" y="11" width="1" height="1" fill="#888"/><rect x="27" y="11" width="2" height="1" fill="#000"/><rect x="10" y="12" width="1" height="1" fill="#000"/><rect x="11" y="12" width="3" height="1" fill="#fff"/><rect x="15" y="12" width="1" height="1" fill="#000"/><rect x="16" y="12" width="4" height="1" fill="#fff"/><rect x="20" y="12" width="1" height="1" fill="#b8b8b8"/><rect x="21" y="12" width="1" height="1" fill="#888"/><rect x="22" y="12" width="1" height="1" fill="#000"/><rect x="23" y="12" width="1" height="1" fill="#8c8c8c"/><rect x="24" y="12" width="6" height="1" fill="#000"/><rect x="9" y="13" width="1" height="1" fill="#000"/><rect x="10" y="13" width="3" height="1" fill="#fff"/><rect x="14" y="13" width="1" height="1" fill="#000"/><rect x="15" y="13" width="6" height="1" fill="#fff"/><rect x="21" y="13" width="1" height="1" fill="#b8b8b8"/><rect x="22" y="13" width="1" height="1" fill="#888"/><rect x="23" y="13" width="1" height="1" fill="#000"/><rect x="24" y="13" width="1" height="1" fill="#8c8c8c"/><rect x="25" y="13" width="6" height="1" fill="#000"/><rect x="8" y="14" width="1" height="1" fill="#000"/><rect x="9" y="14" width="3" height="1" fill="#fff"/><rect x="13" y="14" width="1" height="1" fill="#000"/><rect x="14" y="14" width="8" height="1" fill="#fff"/><rect x="22" y="14" width="1" height="1" fill="#b8b8b8"/><rect x="23" y="14" width="1" height="1" fill="#888"/><rect x="24" y="14" width="1" height="1" fill="#000"/><rect x="25" y="14" width="1" height="1" fill="#8c8c8c"/><rect x="26" y="14" width="1" height="1" fill="#000"/><rect x="27" y="14" width="1" height="1" fill="#8c8c8c"/><rect x="28" y="14" width="1" height="1" fill="#000"/><rect x="29" y="14" width="1" height="1" fill="#8c8c8c"/><rect x="30" y="14" width="2" height="1" fill="#000"/><rect x="7" y="15" width="1" height="1" fill="#000"/><rect x="8" y="15" width="3" height="1" fill="#fff"/><rect x="12" y="15" width="1" height="1" fill="#000"/><rect x="13" y="15" width="10" height="1" fill="#fff"/><rect x="23" y="15" width="1" height="1" fill="#b8b8b8"/><rect x="24" y="15" width="1" height="1" fill="#888"/><rect x="25" y="15" width="1" height="1" fill="#000"/><rect x="26" y="15" width="1" height="1" fill="#8c8c8c"/><rect x="27" y="15" width="1" height="1" fill="#000"/><rect x="28" y="15" width="1" height="1" fill="#8c8c8c"/><rect x="29" y="15" width="1" height="1" fill="#000"/><rect x="30" y="15" width="1" height="1" fill="#8c8c8c"/><rect x="31" y="15" width="2" height="1" fill="#000"/><rect x="6" y="16" width="1" height="1" fill="#000"/><rect x="7" y="16" width="4" height="1" fill="#fff"/><rect x="11" y="16" width="1" height="1" fill="#000"/><rect x="12" y="16" width="12" height="1" fill="#fff"/><rect x="24" y="16" width="1" height="1" fill="#b8b8b8"/><rect x="25" y="16" width="1" height="1" fill="#888"/><rect x="26" y="16" width="1" height="1" fill="#000"/><rect x="27" y="16" width="1" height="1" fill="#8c8c8c"/><rect x="28" y="16" width="1" height="1" fill="#000"/><rect x="29" y="16" width="1" height="1" fill="#8c8c8c"/><rect x="30" y="16" width="1" height="1" fill="#000"/><rect x="31" y="16" width="1" height="1" fill="#8c8c8c"/><rect x="32" y="16" width="2" height="1" fill="#000"/><rect x="5" y="17" width="1" height="1" fill="#000"/><rect x="6" y="17" width="4" height="1" fill="#fff"/><rect x="10" y="17" width="1" height="1" fill="#000"/><rect x="11" y="17" width="14" height="1" fill="#fff"/><rect x="25" y="17" width="1" height="1" fill="#b8b8b8"/><rect x="26" y="17" width="1" height="1" fill="#888"/><rect x="27" y="17" width="1" height="1" fill="#000"/><rect x="28" y="17" width="1" height="1" fill="#8c8c8c"/><rect x="29" y="17" width="1" height="1" fill="#000"/><rect x="30" y="17" width="1" height="1" fill="#8c8c8c"/><rect x="31" y="17" width="1" height="1" fill="#000"/><rect x="32" y="17" width="1" height="1" fill="#8c8c8c"/><rect x="33" y="17" width="2" height="1" fill="#000"/><rect x="4" y="18" width="1" height="1" fill="#000"/><rect x="5" y="18" width="4" height="1" fill="#fff"/><rect x="9" y="18" width="1" height="1" fill="#000"/><rect x="10" y="18" width="16" height="1" fill="#fff"/><rect x="26" y="18" width="1" height="1" fill="#b8b8b8"/><rect x="27" y="18" width="1" height="1" fill="#888"/><rect x="28" y="18" width="1" height="1" fill="#000"/><rect x="29" y="18" width="1" height="1" fill="#8c8c8c"/><rect x="30" y="18" width="1" height="1" fill="#000"/><rect x="31" y="18" width="1" height="1" fill="#8c8c8c"/><rect x="32" y="18" width="3" height="1" fill="#000"/><rect x="3" y="19" width="1" height="1" fill="#000"/><rect x="4" y="19" width="4" height="1" fill="#fff"/><rect x="8" y="19" width="1" height="1" fill="#000"/><rect x="9" y="19" width="18" height="1" fill="#fff"/><rect x="27" y="19" width="1" height="1" fill="#b8b8b8"/><rect x="28" y="19" width="1" height="1" fill="#888"/><rect x="29" y="19" width="1" height="1" fill="#000"/><rect x="30" y="19" width="1" height="1" fill="#8c8c8c"/><rect x="31" y="19" width="4" height="1" fill="#000"/><rect x="3" y="20" width="1" height="1" fill="#000"/><rect x="4" y="20" width="3" height="1" fill="#fff"/><rect x="7" y="20" width="1" height="1" fill="#000"/><rect x="8" y="20" width="20" height="1" fill="#fff"/><rect x="28" y="20" width="1" height="1" fill="#b8b8b8"/><rect x="29" y="20" width="1" height="1" fill="#888"/><rect x="30" y="20" width="5" height="1" fill="#000"/><rect x="3" y="21" width="1" height="1" fill="#000"/><rect x="4" y="21" width="1" height="1" fill="#888"/><rect x="5" y="21" width="1" height="1" fill="#fff"/><rect x="6" y="21" width="1" height="1" fill="#000"/><rect x="7" y="21" width="22" height="1" fill="#fff"/><rect x="29" y="21" width="1" height="1" fill="#b8b8b8"/><rect x="30" y="21" width="5" height="1" fill="#000"/><rect x="4" y="22" width="1" height="1" fill="#888"/><rect x="5" y="22" width="24" height="1" fill="#fff"/><rect x="29" y="22" width="4" height="1" fill="#000"/><rect x="33" y="22" width="1" height="1" fill="#8c8c8c"/><rect x="34" y="22" width="1" height="1" fill="#000"/><rect x="4" y="23" width="1" height="1" fill="#888"/><rect x="5" y="23" width="7" height="1" fill="#fff"/><rect x="12" y="23" width="7" height="1" fill="#888"/><rect x="19" y="23" width="1" height="1" fill="#000"/><rect x="20" y="23" width="9" height="1" fill="#fff"/><rect x="29" y="23" width="3" height="1" fill="#000"/><rect x="32" y="23" width="1" height="1" fill="#8c8c8c"/><rect x="33" y="23" width="2" height="1" fill="#000"/><rect x="4" y="24" width="1" height="1" fill="#888"/><rect x="5" y="24" width="7" height="1" fill="#fff"/><rect x="12" y="24" width="7" height="1" fill="#888"/><rect x="19" y="24" width="1" height="1" fill="#000"/><rect x="20" y="24" width="9" height="1" fill="#fff"/><rect x="29" y="24" width="2" height="1" fill="#000"/><rect x="31" y="24" width="1" height="1" fill="#8c8c8c"/><rect x="32" y="24" width="1" height="1" fill="#000"/><rect x="33" y="24" width="1" height="1" fill="#8c8c8c"/><rect x="34" y="24" width="1" height="1" fill="#000"/><rect x="4" y="25" width="1" height="1" fill="#888"/><rect x="5" y="25" width="7" height="1" fill="#fff"/><rect x="12" y="25" width="7" height="1" fill="#888"/><rect x="19" y="25" width="1" height="1" fill="#000"/><rect x="20" y="25" width="9" height="1" fill="#fff"/><rect x="29" y="25" width="1" height="1" fill="#000"/><rect x="30" y="25" width="1" height="1" fill="#8c8c8c"/><rect x="31" y="25" width="1" height="1" fill="#000"/><rect x="32" y="25" width="1" height="1" fill="#8c8c8c"/><rect x="33" y="25" width="2" height="1" fill="#000"/><rect x="4" y="26" width="1" height="1" fill="#888"/><rect x="5" y="26" width="7" height="1" fill="#fff"/><rect x="12" y="26" width="7" height="1" fill="#888"/><rect x="19" y="26" width="1" height="1" fill="#000"/><rect x="20" y="26" width="9" height="1" fill="#fff"/><rect x="29" y="26" width="1" height="1" fill="#8c8c8c"/><rect x="30" y="26" width="1" height="1" fill="#000"/><rect x="31" y="26" width="1" height="1" fill="#8c8c8c"/><rect x="32" y="26" width="1" height="1" fill="#000"/><rect x="33" y="26" width="1" height="1" fill="#8c8c8c"/><rect x="34" y="26" width="1" height="1" fill="#000"/><rect x="4" y="27" width="1" height="1" fill="#888"/><rect x="5" y="27" width="7" height="1" fill="#fff"/><rect x="12" y="27" width="7" height="1" fill="#888"/><rect x="19" y="27" width="1" height="1" fill="#000"/><rect x="20" y="27" width="9" height="1" fill="#fff"/><rect x="29" y="27" width="1" height="1" fill="#000"/><rect x="30" y="27" width="1" height="1" fill="#8c8c8c"/><rect x="31" y="27" width="1" height="1" fill="#000"/><rect x="32" y="27" width="1" height="1" fill="#8c8c8c"/><rect x="33" y="27" width="2" height="1" fill="#000"/><rect x="4" y="28" width="1" height="1" fill="#888"/><rect x="5" y="28" width="7" height="1" fill="#fff"/><rect x="12" y="28" width="7" height="1" fill="#888"/><rect x="19" y="28" width="1" height="1" fill="#000"/><rect x="20" y="28" width="9" height="1" fill="#fff"/><rect x="29" y="28" width="1" height="1" fill="#8c8c8c"/><rect x="30" y="28" width="1" height="1" fill="#000"/><rect x="31" y="28" width="1" height="1" fill="#8c8c8c"/><rect x="32" y="28" width="1" height="1" fill="#000"/><rect x="33" y="28" width="1" height="1" fill="#8c8c8c"/><rect x="34" y="28" width="1" height="1" fill="#000"/><rect x="4" y="29" width="1" height="1" fill="#888"/><rect x="5" y="29" width="7" height="1" fill="#fff"/><rect x="12" y="29" width="2" height="1" fill="#888"/><rect x="14" y="29" width="1" height="1" fill="#000"/><rect x="15" y="29" width="4" height="1" fill="#888"/><rect x="19" y="29" width="1" height="1" fill="#000"/><rect x="20" y="29" width="9" height="1" fill="#fff"/><rect x="29" y="29" width="1" height="1" fill="#000"/><rect x="30" y="29" width="1" height="1" fill="#8c8c8c"/><rect x="31" y="29" width="1" height="1" fill="#000"/><rect x="32" y="29" width="1" height="1" fill="#8c8c8c"/><rect x="33" y="29" width="1" height="1" fill="#000"/><rect x="4" y="30" width="1" height="1" fill="#888"/><rect x="5" y="30" width="7" height="1" fill="#fff"/><rect x="12" y="30" width="2" height="1" fill="#888"/><rect x="14" y="30" width="1" height="1" fill="#000"/><rect x="15" y="30" width="4" height="1" fill="#888"/><rect x="19" y="30" width="1" height="1" fill="#000"/><rect x="20" y="30" width="9" height="1" fill="#fff"/><rect x="29" y="30" width="1" height="1" fill="#8c8c8c"/><rect x="30" y="30" width="1" height="1" fill="#000"/><rect x="31" y="30" width="1" height="1" fill="#8c8c8c"/><rect x="32" y="30" width="1" height="1" fill="#000"/><rect x="4" y="31" width="1" height="1" fill="#888"/><rect x="5" y="31" width="7" height="1" fill="#fff"/><rect x="12" y="31" width="7" height="1" fill="#888"/><rect x="19" y="31" width="1" height="1" fill="#000"/><rect x="20" y="31" width="9" height="1" fill="#fff"/><rect x="29" y="31" width="1" height="1" fill="#000"/><rect x="30" y="31" width="1" height="1" fill="#8c8c8c"/><rect x="31" y="31" width="1" height="1" fill="#000"/><rect x="4" y="32" width="1" height="1" fill="#888"/><rect x="5" y="32" width="7" height="1" fill="#fff"/><rect x="12" y="32" width="7" height="1" fill="#888"/><rect x="19" y="32" width="1" height="1" fill="#000"/><rect x="20" y="32" width="9" height="1" fill="#fff"/><rect x="29" y="32" width="1" height="1" fill="#8c8c8c"/><rect x="30" y="32" width="1" height="1" fill="#000"/><rect x="4" y="33" width="1" height="1" fill="#888"/><rect x="5" y="33" width="7" height="1" fill="#fff"/><rect x="12" y="33" width="7" height="1" fill="#888"/><rect x="19" y="33" width="1" height="1" fill="#000"/><rect x="20" y="33" width="9" height="1" fill="#fff"/><rect x="29" y="33" width="1" height="1" fill="#000"/><rect x="4" y="34" width="25" height="1" fill="#000"/></svg>
<svg style="left:205px;top:383px" width="4" height="7" shape-rendering="crispEdges"><rect x="0" y="0" width="1" height="7" fill="#0000ff"/><rect x="1" y="1" width="1" height="5" fill="#0000ff"/><rect x="2" y="2" width="1" height="3" fill="#0000ff"/><rect x="3" y="3" width="1" height="1" fill="#0000ff"/></svg>
<div style="left:221px;top:377px;width:660px;height:21px;background:#fff;border:1px solid #7a7a7a;box-sizing:border-box"></div>
<svg style="left:868px;top:385px" width="9" height="6" viewBox="0 0 9 6"><path d="M0.25 0.7 L4.05 4.5 L7.85 0.7" fill="none" stroke="#555" stroke-width="1.15"/></svg>
<svg style="left:205px;top:407px" width="4" height="7" shape-rendering="crispEdges"><rect x="0" y="0" width="1" height="7" fill="#0000ff"/><rect x="1" y="1" width="1" height="5" fill="#0000ff"/><rect x="2" y="2" width="1" height="3" fill="#0000ff"/><rect x="3" y="3" width="1" height="1" fill="#0000ff"/></svg>
<div style="left:221px;top:401px;width:175px;height:21px;background:#fff;border:1px solid #7a7a7a;box-sizing:border-box"></div>
<svg style="left:383px;top:409px" width="9" height="6" viewBox="0 0 9 6"><path d="M0.25 0.7 L4.05 4.5 L7.85 0.7" fill="none" stroke="#555" stroke-width="1.15"/></svg>
<svg style="left:402px;top:407px" width="4" height="7" shape-rendering="crispEdges"><rect x="0" y="0" width="1" height="7" fill="#0000ff"/><rect x="1" y="1" width="1" height="5" fill="#0000ff"/><rect x="2" y="2" width="1" height="3" fill="#0000ff"/><rect x="3" y="3" width="1" height="1" fill="#0000ff"/></svg>
<div style="left:418px;top:401px;width:55px;height:20px;background:#fff;border:1px solid #7a7a7a;box-sizing:border-box"></div>
<div style="left:629px;top:401px;width:252px;height:20px;background:#fff;border:1px solid #7a7a7a;box-sizing:border-box"></div>
<svg style="left:205px;top:434px" width="4" height="7" shape-rendering="crispEdges"><rect x="0" y="0" width="1" height="7" fill="#0000ff"/><rect x="1" y="1" width="1" height="5" fill="#0000ff"/><rect x="2" y="2" width="1" height="3" fill="#0000ff"/><rect x="3" y="3" width="1" height="1" fill="#0000ff"/></svg>
<div style="left:221px;top:428px;width:90px;height:21px;background:#fff;border:1px solid #7a7a7a;box-sizing:border-box"></div>
<svg style="left:298px;top:436px" width="9" height="6" viewBox="0 0 9 6"><path d="M0.25 0.7 L4.05 4.5 L7.85 0.7" fill="none" stroke="#555" stroke-width="1.15"/></svg>
<svg style="left:319px;top:434px" width="4" height="7" shape-rendering="crispEdges"><rect x="0" y="0" width="1" height="7" fill="#0000ff"/><rect x="1" y="1" width="1" height="5" fill="#0000ff"/><rect x="2" y="2" width="1" height="3" fill="#0000ff"/><rect x="3" y="3" width="1" height="1" fill="#0000ff"/></svg>
<div style="left:335px;top:428px;width:138px;height:21px;background:#fff;border:1px solid #7a7a7a;box-sizing:border-box"></div>
<svg style="left:460px;top:436px" width="9" height="6" viewBox="0 0 9 6"><path d="M0.25 0.7 L4.05 4.5 L7.85 0.7" fill="none" stroke="#555" stroke-width="1.15"/></svg>
<div style="left:629px;top:428px;width:252px;height:21px;background:#fff;border:1px solid #7a7a7a;box-sizing:border-box"></div>
<svg style="left:868px;top:436px" width="9" height="6" viewBox="0 0 9 6"><path d="M0.25 0.7 L4.05 4.5 L7.85 0.7" fill="none" stroke="#555" stroke-width="1.15"/></svg>
<div style="left:221px;top:455px;width:90px;height:21px;background:#fff;border:1px solid #cccccc;box-sizing:border-box"></div>
<svg style="left:298px;top:463px" width="9" height="6" viewBox="0 0 9 6"><path d="M0.25 0.7 L4.05 4.5 L7.85 0.7" fill="none" stroke="#bfbfbf" stroke-width="1.15"/></svg>
<div style="left:335px;top:455px;width:138px;height:21px;background:#e4e4e4;border:1px solid #adadad;box-sizing:border-box"></div>
<svg style="left:460px;top:463px" width="9" height="6" viewBox="0 0 9 6"><path d="M0.25 0.7 L4.05 4.5 L7.85 0.7" fill="none" stroke="#555" stroke-width="1.15"/></svg>
<svg style="left:613px;top:461px" width="4" height="7" shape-rendering="crispEdges"><rect x="0" y="0" width="1" height="7" fill="#0000ff"/><rect x="1" y="1" width="1" height="5" fill="#0000ff"/><rect x="2" y="2" width="1" height="3" fill="#0000ff"/><rect x="3" y="3" width="1" height="1" fill="#0000ff"/></svg>
<div style="left:629px;top:455px;width:252px;height:21px;background:#e4e4e4;border:1px solid #adadad;box-sizing:border-box"></div>
<svg style="left:868px;top:463px" width="9" height="6" viewBox="0 0 9 6"><path d="M0.25 0.7 L4.05 4.5 L7.85 0.7" fill="none" stroke="#555" stroke-width="1.15"/></svg>
<div style="left:221px;top:485px;width:86px;height:21px;background:#fff;border:1px solid #7a7a7a;box-sizing:border-box"></div>
<div style="left:310px;top:486px;width:21px;height:19px;background:#e1e1e1;border:1px solid #adadad;box-sizing:border-box"></div>
<svg style="left:314px;top:489px" width="13" height="13" shape-rendering="crispEdges"><rect x="0" y="0" width="13" height="3" fill="#001e85"/><rect x="0" y="3" width="13" height="10" fill="#8e8a7c"/><rect x="1" y="4" width="2" height="2" fill="#fff"/><rect x="4" y="4" width="2" height="2" fill="#fff"/><rect x="7" y="4" width="2" height="2" fill="#fff"/><rect x="10" y="4" width="2" height="2" fill="#fff"/><rect x="1" y="7" width="2" height="2" fill="#fff"/><rect x="4" y="7" width="2" height="2" fill="#fff"/><rect x="7" y="7" width="2" height="2" fill="#fff"/><rect x="10" y="7" width="2" height="2" fill="#fff"/><rect x="1" y="10" width="2" height="2" fill="#fff"/><rect x="4" y="10" width="2" height="2" fill="#fff"/><rect x="7" y="10" width="2" height="2" fill="#fff"/><rect x="10" y="10" width="2" height="2" fill="#fff"/><rect x="6" y="6" width="4" height="4" fill="#ff8c00"/><rect x="7" y="7" width="2" height="2" fill="#fff"/></svg>
<div style="left:337px;top:486px;width:80px;height:21px;background:#e1e1e1;border:1px solid #adadad;box-sizing:border-box"></div>
<div style="left:442px;top:487px;width:439px;height:20px;background:#fff;border:1px solid #7a7a7a;box-sizing:border-box"></div>
<div style="left:19px;top:541px;width:860px;height:90px;border:1px solid #d9d9d9;border-bottom:none;box-sizing:border-box"></div>
<div style="left:20px;top:542px;width:858px;height:89px;border-left:3px solid #fff;border-top:1px solid #fff;border-right:1px solid #fff;box-sizing:border-box"></div>
<div style="left:110px;top:523px;width:74px;height:18px;border:1px solid #d9d9d9;border-bottom:none;box-sizing:border-box;background:#f0f0f0"></div>
<div style="left:183px;top:523px;width:108px;height:18px;border:1px solid #d9d9d9;border-bottom:none;box-sizing:border-box;background:#f0f0f0"></div>
<div style="left:19px;top:521px;width:92px;height:22px;border:1px solid #d9d9d9;border-bottom:none;box-sizing:border-box;background:#fff"></div>
<div style="left:179px;top:555px;width:13px;height:13px;background:#fff;border:1px solid #333;box-sizing:border-box"></div>
<svg style="left:179px;top:555px" width="13" height="13" viewBox="0 0 13 13"><path d="M2.5 6.2 L5 8.8 L10.3 3.3" fill="none" stroke="#333" stroke-width="1.3"/></svg>
<div style="left:179px;top:578px;width:129px;height:21px;background:#e4e4e4;border:1px solid #adadad;box-sizing:border-box"></div>
<svg style="left:295px;top:586px" width="9" height="6" viewBox="0 0 9 6"><path d="M0.25 0.7 L4.05 4.5 L7.85 0.7" fill="none" stroke="#555" stroke-width="1.15"/></svg>
<div style="left:179px;top:607px;width:102px;height:21px;background:#fff;border:1px solid #7a7a7a;box-sizing:border-box"></div>
<div style="left:284px;top:608px;width:21px;height:19px;background:#e1e1e1;border:1px solid #adadad;box-sizing:border-box"></div>
<svg style="left:288px;top:611px" width="13" height="13" shape-rendering="crispEdges"><rect x="0" y="0" width="13" height="3" fill="#001e85"/><rect x="0" y="3" width="13" height="10" fill="#8e8a7c"/><rect x="1" y="4" width="2" height="2" fill="#fff"/><rect x="4" y="4" width="2" height="2" fill="#fff"/><rect x="7" y="4" width="2" height="2" fill="#fff"/><rect x="10" y="4" width="2" height="2" fill="#fff"/><rect x="1" y="7" width="2" height="2" fill="#fff"/><rect x="4" y="7" width="2" height="2" fill="#fff"/><rect x="7" y="7" width="2" height="2" fill="#fff"/><rect x="10" y="7" width="2" height="2" fill="#fff"/><rect x="1" y="10" width="2" height="2" fill="#fff"/><rect x="4" y="10" width="2" height="2" fill="#fff"/><rect x="7" y="10" width="2" height="2" fill="#fff"/><rect x="10" y="10" width="2" height="2" fill="#fff"/><rect x="6" y="6" width="4" height="4" fill="#ff8c00"/><rect x="7" y="7" width="2" height="2" fill="#fff"/></svg>
<div style="left:413px;top:551px;width:67px;height:21px;background:#fff;border:1px solid #7a7a7a;box-sizing:border-box"></div>
<div style="left:483px;top:552px;width:21px;height:19px;background:#e1e1e1;border:1px solid #adadad;box-sizing:border-box"></div>
<svg style="left:487px;top:555px" width="13" height="13" shape-rendering="crispEdges"><rect x="0" y="0" width="13" height="3" fill="#001e85"/><rect x="0" y="3" width="13" height="10" fill="#8e8a7c"/><rect x="1" y="4" width="2" height="2" fill="#fff"/><rect x="4" y="4" width="2" height="2" fill="#fff"/><rect x="7" y="4" width="2" height="2" fill="#fff"/><rect x="10" y="4" width="2" height="2" fill="#fff"/><rect x="1" y="7" width="2" height="2" fill="#fff"/><rect x="4" y="7" width="2" height="2" fill="#fff"/><rect x="7" y="7" width="2" height="2" fill="#fff"/><rect x="10" y="7" width="2" height="2" fill="#fff"/><rect x="1" y="10" width="2" height="2" fill="#fff"/><rect x="4" y="10" width="2" height="2" fill="#fff"/><rect x="7" y="10" width="2" height="2" fill="#fff"/><rect x="10" y="10" width="2" height="2" fill="#fff"/><rect x="6" y="6" width="4" height="4" fill="#ff8c00"/><rect x="7" y="7" width="2" height="2" fill="#fff"/></svg>
<div style="left:413px;top:578px;width:66px;height:21px;background:#fff;border:1px solid #7a7a7a;box-sizing:border-box"></div>
<div style="left:482px;top:579px;width:21px;height:19px;background:#e1e1e1;border:1px solid #adadad;box-sizing:border-box"></div>
<svg style="left:486px;top:582px" width="13" height="13" shape-rendering="crispEdges"><rect x="0" y="0" width="13" height="3" fill="#001e85"/><rect x="0" y="3" width="13" height="10" fill="#8e8a7c"/><rect x="1" y="4" width="2" height="2" fill="#fff"/><rect x="4" y="4" width="2" height="2" fill="#fff"/><rect x="7" y="4" width="2" height="2" fill="#fff"/><rect x="10" y="4" width="2" height="2" fill="#fff"/><rect x="1" y="7" width="2" height="2" fill="#fff"/><rect x="4" y="7" width="2" height="2" fill="#fff"/><rect x="7" y="7" width="2" height="2" fill="#fff"/><rect x="10" y="7" width="2" height="2" fill="#fff"/><rect x="1" y="10" width="2" height="2" fill="#fff"/><rect x="4" y="10" width="2" height="2" fill="#fff"/><rect x="7" y="10" width="2" height="2" fill="#fff"/><rect x="10" y="10" width="2" height="2" fill="#fff"/><rect x="6" y="6" width="4" height="4" fill="#ff8c00"/><rect x="7" y="7" width="2" height="2" fill="#fff"/></svg>
<div style="left:665px;top:555px;width:13px;height:13px;background:#fff;border:1px solid #333;box-sizing:border-box"></div>
<svg style="left:665px;top:555px" width="13" height="13" viewBox="0 0 13 13"><path d="M2.5 6.2 L5 8.8 L10.3 3.3" fill="none" stroke="#333" stroke-width="1.3"/></svg>
<div style="left:665px;top:578px;width:144px;height:21px;background:#fff;border:1px solid #d5d5d5;box-sizing:border-box"></div>
<div style="left:812px;top:579px;width:26px;height:19px;background:#cdcdcd;border:1px solid #c2c2c2;box-sizing:border-box"></div>
<svg style="left:812px;top:579px" width="26" height="19" viewBox="0 0 26 19"><path d="M8.11 3.07 L18.61 14.48 L17.99 15.12 L6.29 4.93 Q6.2 3.0 8.11 3.07Z" fill="#5c5c5c"/><path d="M18.28 3.19 L18.92 3.81 L9.24 15.1 Q7.6 15.3 7.36 13.3Z" fill="#5c5c5c"/></svg>
<div style="left:842px;top:579px;width:26px;height:19px;background:#cdcdcd;border:1px solid #c2c2c2;box-sizing:border-box"></div>
<svg style="left:842px;top:579px" width="26" height="19" viewBox="0 0 26 19" shape-rendering="crispEdges"><rect x="5" y="3" width="15" height="11" fill="#6a6a6a"/><path d="M15.5 14 L21 14 L18.3 17 Z" fill="#6a6a6a"/></svg>
<div class="t" style="left:23px;top:7px;font-size:12px;color:#000;letter-spacing:-0.001px;">Natürliche Person&nbsp; [Hinzufügen]</div>
<div class="t" style="left:14px;top:34px;font-size:11px;color:#000;letter-spacing:-0.135px;">Personendaten</div>
<div class="t" style="left:99px;top:36px;font-size:11px;color:#000;letter-spacing:-0.386px;">Kommunikation</div>
<div class="t" style="left:183px;top:36px;font-size:11px;color:#000;letter-spacing:-0.141px;">Adressen</div>
<div class="t" style="left:239px;top:36px;font-size:11px;color:#000;letter-spacing:0.034px;">Überprüfungen</div>
<div class="t" style="left:324px;top:36px;font-size:11px;color:#000;letter-spacing:-0.135px;">Organisieren</div>
<div class="t" style="left:397px;top:36px;font-size:11px;color:#000;letter-spacing:-0.147px;">Bankverbindung</div>
<div class="t" style="left:487px;top:36px;font-size:11px;color:#000;letter-spacing:-0.006px;">Zusatz Waffenwesen</div>
<div class="t" style="left:600px;top:36px;font-size:11px;color:#000;letter-spacing:-0.148px;">Zusatz Jagdwesen</div>
<div class="t" style="left:23px;top:63px;font-size:11px;color:#6d6d6d;letter-spacing:-0.124px;">[Die aktuellen Adressdaten werden erst nach Beendigung des Hinzufügemodus angezeigt]</div>
<div class="t" style="left:72px;top:90px;font-size:11px;color:#000;letter-spacing:-0.026px;">Personenart:</div>
<div class="t" style="left:224px;top:90px;font-size:11px;color:#000;letter-spacing:-0.232px;">Behörde</div>
<div class="t" style="left:72px;top:114px;font-size:11px;color:#000;letter-spacing:-0.352px;">Name:</div>
<div class="t" style="left:480px;top:114px;font-size:11px;color:#000;letter-spacing:-0.204px;">Kurzbezeichnung:</div>
<div class="t" style="left:72px;top:140px;font-size:11px;color:#000;letter-spacing:-0.067px;">Organisationseinheit:</div>
<div class="t" style="left:19px;top:350px;font-size:11px;font-weight:bold;color:#000;letter-spacing:0.541px;">Hauptwohnung</div>
<div class="t" style="left:72px;top:378px;font-size:11px;color:#000;letter-spacing:0.206px;">Anschrifttyp:</div>
<div class="t" style="left:226px;top:377px;font-size:11px;color:#000;letter-spacing:-0.001px;">Hauptwohnung</div>
<div class="t" style="left:72px;top:402px;font-size:11px;color:#000;letter-spacing:-0.209px;">Straße/Hausnummer:</div>
<div class="t" style="left:481px;top:402px;font-size:11px;color:#000;letter-spacing:-0.091px;">Adresszusatz:</div>
<div class="t" style="left:72px;top:429px;font-size:11px;color:#000;letter-spacing:0.022px;">Postleitzahl/Ort:</div>
<div class="t" style="left:481px;top:429px;font-size:11px;color:#000;letter-spacing:0.137px;">Ortsteil:</div>
<div class="t" style="left:72px;top:456px;font-size:11px;color:#000;letter-spacing:-0.361px;">KGS/Bundesland:</div>
<div class="t" style="left:481px;top:456px;font-size:11px;color:#000;letter-spacing:0.250px;">Staat:</div>
<div class="t" style="left:72px;top:486px;font-size:11px;color:#000;letter-spacing:-0.091px;">Auflösungsdatum:</div>
<div class="t" style="left:344px;top:487px;font-size:11px;color:#000;letter-spacing:0.135px;">Kategorien...</div>
<div class="t" style="left:27px;top:521px;font-size:11px;color:#000;letter-spacing:0.071px;">Waffenrechtlich</div>
<div class="t" style="left:115px;top:523px;font-size:11px;color:#000;letter-spacing:-0.136px;">Jagdrechtlich</div>
<div class="t" style="left:190px;top:523px;font-size:11px;color:#000;letter-spacing:0.025px;">Sprengstoffrechtlich</div>
<div class="t" style="left:31px;top:552px;font-size:11px;color:#000;letter-spacing:0.144px;">Waffenrechtlich relevant</div>
<div class="t" style="left:31px;top:579px;font-size:11px;color:#000;letter-spacing:0.183px;">Waffe Akte Status:</div>
<div class="t" style="left:31px;top:608px;font-size:11px;color:#000;letter-spacing:-0.025px;">Datenaufbewahrung bis</div>
<div class="t" style="left:183px;top:579px;font-size:11px;color:#000;letter-spacing:-0.245px;">Akte im Besitz</div>
<div class="t" style="left:324px;top:552px;font-size:11px;color:#000;letter-spacing:-0.007px;">geändert am</div>
<div class="t" style="left:324px;top:579px;font-size:11px;color:#000;letter-spacing:-0.007px;">geändert am</div>
<div class="t" style="left:417px;top:551px;font-size:11px;color:#000;letter-spacing:0.104px;">12.07.2017</div>
<div class="t" style="left:417px;top:578px;font-size:11px;color:#000;letter-spacing:0.104px;">12.07.2017</div>
<div class="t" style="left:517px;top:551px;font-size:11px;color:#000;letter-spacing:-0.114px;">Zuständig Hauptwohnsitz</div>
<div class="t" style="left:517px;top:579px;font-size:11px;color:#000;letter-spacing:0.080px;">Waffe Akte gesendet an:</div>
</body></html>
